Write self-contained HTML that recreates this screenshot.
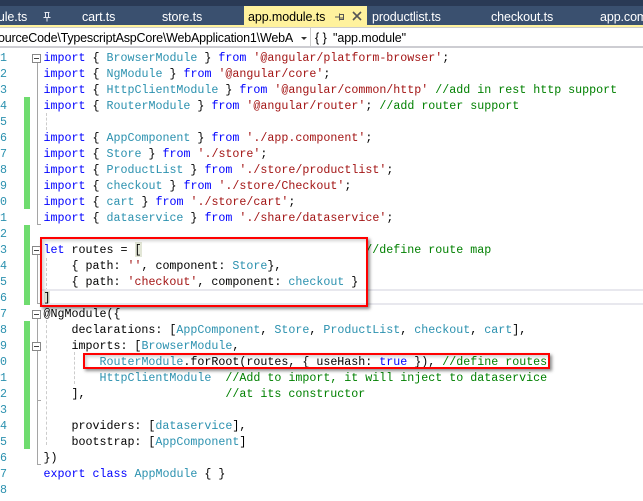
<!DOCTYPE html>
<html><head><meta charset="utf-8"><style>
*{margin:0;padding:0;box-sizing:border-box}
html,body{width:643px;height:501px;overflow:hidden;background:#fff}
body{position:relative;font-family:"Liberation Mono",monospace}
.a{position:absolute}
.l{position:absolute;left:43.5px;margin-top:1px;font:11.67px/16px "Liberation Mono",monospace;color:#000;white-space:pre;letter-spacing:0}
.n{position:absolute;width:6px;left:0;margin-top:1px;font:11.67px/16px "Liberation Mono",monospace;color:#2b91af;text-align:right;white-space:pre}
.k{color:#00f}.t{color:#2b91af}.s{color:#a31515}.c{color:#008000}
.tab{position:absolute;top:8px;font:12.5px/18px "Liberation Sans",sans-serif;letter-spacing:-.1px;color:#fff;white-space:pre}
.g{position:absolute;left:24px;width:6px;background:#6fdc6f}
.f{position:absolute;width:9px;height:9px;left:32px;border:1px solid #888;background:#fff}
.f:after{content:"";position:absolute;left:1px;top:3px;width:5px;height:1px;background:#444}
.v{position:absolute;width:1px;left:37px;background:#a5a5a5}
.h{position:absolute;height:1px;left:37px;width:4px;background:#a5a5a5}
.d{position:absolute;width:0;border-left:1px dashed #ccc;left:46px}
.r{position:absolute;box-shadow:2px 2px 3px rgba(0,0,0,.45),inset 2px 2px 3px rgba(0,0,0,.18)}
</style></head><body>
<div class="a" style="left:0;top:0;width:643px;height:6px;background:#2a3a55"></div>
<div class="a" style="left:0;top:6px;width:643px;height:19px;background:#3a506f"></div>
<div class="a" style="left:0;top:25px;width:643px;height:2px;background:#fff29d"></div>
<div class="a" style="left:244px;top:6px;width:123px;height:19px;background:#fff29d"></div>
<div class="tab" style="left:-9px">dule.ts</div>
<svg class="a" style="left:42px;top:11px" width="10" height="11"><path d="M2.5 1.5h5M3.5 1.5v5M6.5 1.5v5M1.5 6.5h7M5 6.5v4" stroke="#e4e8f0" fill="none"/></svg>
<div class="tab" style="left:82px">cart.ts</div>
<div class="tab" style="left:162px">store.ts</div>
<div class="tab" style="left:248px;color:#000">app.module.ts</div>
<svg class="a" style="left:333px;top:10px" width="30" height="14"><path d="M2 7h4M6.5 3.5v7M6.5 4.5h4v5h-4M6.5 8h4" stroke="#555" fill="none"/><path d="M20 2l8 8M28 2l-8 8" stroke="#555" stroke-width="1.6" fill="none"/></svg>
<div class="tab" style="left:372px">productlist.ts</div>
<div class="tab" style="left:491px">checkout.ts</div>
<div class="tab" style="left:600px">app.com</div>

<div class="a" style="left:0;top:27px;width:643px;height:21px;background:#fff;border-bottom:2px solid #cdcdd2;border-top:1px solid #ccc"></div>
<div class="a" style="left:-2px;top:29px;width:295px;overflow:hidden;font:12.5px/18px 'Liberation Sans',sans-serif;letter-spacing:-.2px;color:#000;white-space:pre">ourceCode\TypescriptAspCore\WebApplication1\WebAp</div>
<div class="a" style="left:301px;top:37px;width:0;height:0;border:3px solid transparent;border-top:3px solid #333"></div>
<div class="a" style="left:310px;top:27px;width:1px;height:20px;background:#ccc"></div>
<div class="a" style="left:315px;top:29px;font:12.5px/18px 'Liberation Sans',sans-serif;white-space:pre">{ }</div>
<div class="a" style="left:333px;top:29px;font:12.5px/18px 'Liberation Sans',sans-serif;letter-spacing:-.1px;white-space:pre">"app.module"</div>

<div class="g" style="top:97px;height:112px"></div>
<div class="g" style="top:225px;height:80px"></div>
<div class="g" style="top:321px;height:128px"></div>

<div class="v" style="top:62px;height:162px"></div><div class="h" style="top:224px"></div>
<div class="v" style="top:254px;height:49px"></div><div class="h" style="top:303px"></div>
<div class="v" style="top:318px;height:146px"></div><div class="h" style="top:464px"></div>
<div class="h" style="top:400px"></div>
<div class="f" style="top:54px"></div><div class="f" style="top:246px"></div><div class="f" style="top:310px"></div><div class="f" style="top:342px"></div>
<div class="d" style="top:113px;height:17px"></div>
<div class="d" style="top:258px;height:38px"></div>
<div class="d" style="top:320px;height:125px"></div>
<div class="d" style="top:352px;height:32px;left:74px"></div>

<div class="a" style="left:40px;top:289px;width:603px;height:2px;background:#e8e8ee"></div>
<div class="a" style="left:40px;top:303px;width:603px;height:2px;background:#e8e8ee"></div>
<div class="a" style="left:135px;top:242px;width:7px;height:15px;background:#e2e6d6"></div>
<div class="a" style="left:44px;top:291px;width:6px;height:12px;background:#e2e6d6"></div>

<div class="n" style="top:49px">1</div><div class="n" style="top:65px">2</div><div class="n" style="top:81px">3</div><div class="n" style="top:97px">4</div><div class="n" style="top:113px">5</div><div class="n" style="top:129px">6</div><div class="n" style="top:145px">7</div><div class="n" style="top:161px">8</div><div class="n" style="top:177px">9</div><div class="n" style="top:193px">0</div><div class="n" style="top:209px">1</div><div class="n" style="top:225px">2</div><div class="n" style="top:241px">3</div><div class="n" style="top:257px">4</div><div class="n" style="top:273px">5</div><div class="n" style="top:289px">6</div><div class="n" style="top:305px">7</div><div class="n" style="top:321px">8</div><div class="n" style="top:337px">9</div><div class="n" style="top:353px">0</div><div class="n" style="top:369px">1</div><div class="n" style="top:385px">2</div><div class="n" style="top:401px">3</div><div class="n" style="top:417px">4</div><div class="n" style="top:433px">5</div><div class="n" style="top:449px">6</div><div class="n" style="top:465px">7</div><div class="n" style="top:481px">8</div>

<div class="l" style="top:49px"><span class="k">import</span> { <span class="t">BrowserModule</span> } <span class="k">from</span> <span class="s">'@angular/platform-browser'</span>;</div>
<div class="l" style="top:65px"><span class="k">import</span> { <span class="t">NgModule</span> } <span class="k">from</span> <span class="s">'@angular/core'</span>;</div>
<div class="l" style="top:81px"><span class="k">import</span> { <span class="t">HttpClientModule</span> } <span class="k">from</span> <span class="s">'@angular/common/http'</span> <span class="c">//add in rest http support</span></div>
<div class="l" style="top:97px"><span class="k">import</span> { <span class="t">RouterModule</span> } <span class="k">from</span> <span class="s">'@angular/router'</span>; <span class="c">//add router support</span></div>
<div class="l" style="top:129px"><span class="k">import</span> { <span class="t">AppComponent</span> } <span class="k">from</span> <span class="s">'./app.component'</span>;</div>
<div class="l" style="top:145px"><span class="k">import</span> { <span class="t">Store</span> } <span class="k">from</span> <span class="s">'./store'</span>;</div>
<div class="l" style="top:161px"><span class="k">import</span> { <span class="t">ProductList</span> } <span class="k">from</span> <span class="s">'./store/productlist'</span>;</div>
<div class="l" style="top:177px"><span class="k">import</span> { <span class="t">checkout</span> } <span class="k">from</span> <span class="s">'./store/Checkout'</span>;</div>
<div class="l" style="top:193px"><span class="k">import</span> { <span class="t">cart</span> } <span class="k">from</span> <span class="s">'./store/cart'</span>;</div>
<div class="l" style="top:209px"><span class="k">import</span> { <span class="t">dataservice</span> } <span class="k">from</span> <span class="s">'./share/dataservice'</span>;</div>
<div class="l" style="top:241px"><span class="k">let</span> routes = [                                <span class="c">//define route map</span></div>
<div class="l" style="top:257px">    { path: <span class="s">''</span>, component: <span class="t">Store</span>},</div>
<div class="l" style="top:273px">    { path: <span class="s">'checkout'</span>, component: <span class="t">checkout</span> }</div>
<div class="l" style="top:289px">]</div>
<div class="l" style="top:305px">@NgModule({</div>
<div class="l" style="top:321px">    declarations: [<span class="t">AppComponent</span>, <span class="t">Store</span>, <span class="t">ProductList</span>, <span class="t">checkout</span>, <span class="t">cart</span>],</div>
<div class="l" style="top:337px">    imports: [<span class="t">BrowserModule</span>,</div>
<div class="l" style="top:353px">        <span class="t">RouterModule</span>.forRoot(routes, { useHash: <span class="k">true</span> }), <span class="c">//define routes</span></div>
<div class="l" style="top:369px">        <span class="t">HttpClientModule</span>  <span class="c">//Add to import, it will inject to dataservice</span></div>
<div class="l" style="top:385px">    ],                    <span class="c">//at its constructor</span></div>
<div class="l" style="top:417px">    providers: [<span class="t">dataservice</span>],</div>
<div class="l" style="top:433px">    bootstrap: [<span class="t">AppComponent</span>]</div>
<div class="l" style="top:449px">})</div>
<div class="l" style="top:465px"><span class="k">export</span> <span class="k">class</span> <span class="t">AppModule</span> { }</div>

<div class="r" style="left:40px;top:237px;width:328px;height:70px;border:2px solid #f00"></div>
<div class="r" style="left:83px;top:353px;width:467px;height:16px;border:2px solid #f00"></div>
</body></html>
